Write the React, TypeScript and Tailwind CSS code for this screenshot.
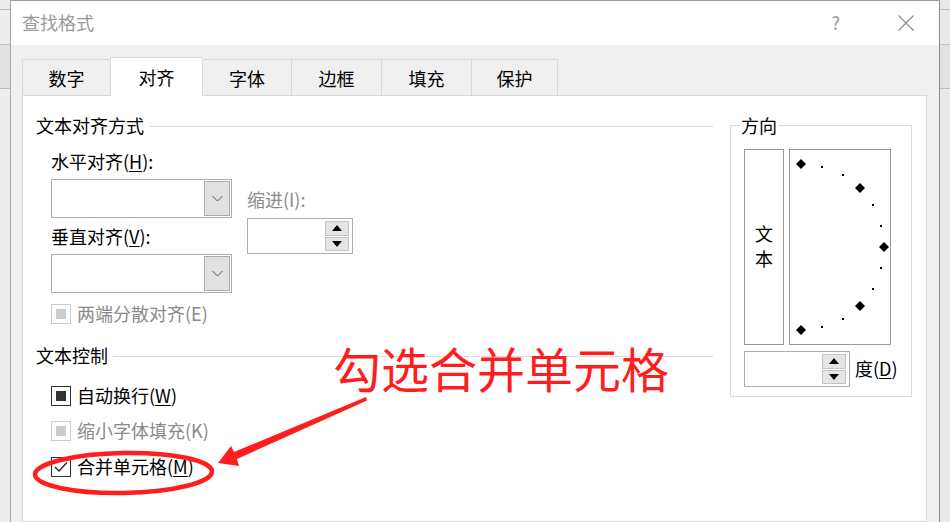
import React from 'react';

const tabs = [
  { label: '数字', w: 'w-[88px]' },
  { label: '对齐', w: 'w-[92px]', active: true },
  { label: '字体', w: 'w-[89px]' },
  { label: '边框', w: 'w-[90px]' },
  { label: '填充', w: 'w-[90px]' },
  { label: '保护', w: 'w-[87px]', last: true },
];

const Chevron = () => (
  <svg width="11" height="7" viewBox="0 0 11 7">
    <path d="M0.5 1 L5.5 6 L10.5 1" fill="none" stroke="#5a5a5a" strokeWidth="1" />
  </svg>
);

const Tri: React.FC<{ down?: boolean }> = ({ down }) => (
  <svg width="10" height="6" viewBox="0 0 10 6">
    <polygon points={down ? '0,0 10,0 5,6' : '0,6 10,6 5,0'} fill="#000" />
  </svg>
);

const Combo = () => (
  <div className="flex h-[39px] w-[181px] justify-end border border-[#adadad] bg-white p-[1px]">
    <div className="flex w-[26px] items-center justify-center border border-[#adadad] bg-[#e1e1e1]">
      <Chevron />
    </div>
  </div>
);

const Spinner = () => (
  <div className="flex h-[36px] w-[106px] justify-end border border-[#adadad] bg-white py-[2px] pr-[3px]">
    <div className="flex w-[24px] flex-col gap-px">
      <div className="flex flex-1 items-center justify-center border border-[#c4c4c4] bg-[#e5e5e5]">
        <Tri />
      </div>
      <div className="flex flex-1 items-center justify-center border border-[#c4c4c4] bg-[#e5e5e5]">
        <Tri down />
      </div>
    </div>
  </div>
);

type BoxKind = 'mixed' | 'checked' | 'disabled';

const CheckRow: React.FC<{ kind: BoxKind; children: React.ReactNode; className?: string }> = ({ kind, children, className }) => (
  <div className={`flex h-[20px] items-center ${className ?? ''}`}>
    <div
      className={`flex h-[20px] w-[20px] items-center justify-center border bg-white ${
        kind === 'disabled' ? 'border-[#cccccc]' : 'border-[#333333]'
      }`}
    >
      {kind === 'mixed' && <div className="h-[10px] w-[10px] bg-[#333333]" />}
      {kind === 'disabled' && <div className="h-[10px] w-[10px] bg-[#cccccc]" />}
      {kind === 'checked' && (
        <svg width="14" height="12" viewBox="0 0 14 12">
          <path d="M1 6 L5 10 L13 1.5" fill="none" stroke="#222" strokeWidth="1.3" />
        </svg>
      )}
    </div>
    <span className={`ml-[6px] pb-[2px] leading-[22px] ${kind === 'disabled' ? 'text-[#8a8a8a]' : 'text-black'}`}>{children}</span>
  </div>
);

const GroupHeader: React.FC<{ label: string; className?: string }> = ({ label, className }) => (
  <div className={`flex h-[24px] items-center ${className ?? ''}`}>
    <span className="pb-[2px] leading-[22px]">{label}</span>
    <div className="ml-[5px] h-px flex-1 bg-[#dcdcdc]" />
  </div>
);

const Side: React.FC<{ right?: boolean }> = ({ right }) => (
  <div className={`flex w-[10px] flex-col ${right ? 'bg-[#e9e9e9]' : 'bg-[#ededed]'}`}>
    <div className="h-[10px] border-b border-[#bdbdbd]" />
    <div className="h-[35px] border-b border-[#c4c4c4]" />
    <div className="h-[44px] border-b border-[#bdbdbd] bg-[#e2e2e2]" />
    <div className="flex-1" />
  </div>
);

const bigDots: [number, number][] = [
  [12, 15],
  [71, 39],
  [95, 98],
  [71, 157],
  [12, 181],
];
const smallDots: [number, number][] = [
  [33, 18],
  [54, 26],
  [84, 56],
  [92, 77],
  [92, 119],
  [84, 140],
  [54, 170],
  [33, 178],
];

const Dial = () => (
  <svg width="100" height="194" viewBox="1 1 100 194">
    {bigDots.map(([x, y]) => (
      <polygon key={`${x}-${y}`} points={`${x},${y - 5} ${x + 5},${y} ${x},${y + 5} ${x - 5},${y}`} fill="#000" />
    ))}
    {smallDots.map(([x, y]) => (
      <rect key={`${x}-${y}`} x={x - 1} y={y - 1} width="2" height="2" fill="#000" />
    ))}
  </svg>
);

export default function App() {
  return (
    <div className="relative flex h-[522px] w-[950px] overflow-hidden bg-[#ededed] font-['Noto_Sans_CJK_SC',sans-serif] text-[18px] text-black">
      <Side />
      <div className="flex w-[930px] flex-col border-x border-t border-l-[#a6a6a6] border-r-[#8e8e8e] border-t-[#9a9a9a]">
        {/* title bar */}
        <div className="flex h-[44px] items-center bg-white pb-[3px] pl-[11px] pr-[25px]">
          <span className="leading-[24px] text-[#9b9b9b]">查找格式</span>
          <span className="ml-auto leading-[24px] text-[#9b9b9b]">?</span>
          <svg className="ml-[58px] mt-[2px]" width="16" height="16" viewBox="0 0 16 16">
            <path d="M0.5 0.5 L15.5 15.5 M15.5 0.5 L0.5 15.5" stroke="#8a8a8a" strokeWidth="1.1" />
          </svg>
        </div>

        {/* body */}
        <div className="flex flex-1 flex-col bg-[#f0f0f0] pl-[11px] pr-[12px] pt-[12px]">
          <div className="relative z-10 flex items-end">
            {tabs.map((t) => (
              <div
                key={t.label}
                className={`flex items-center justify-center border-l border-t border-[#d9d9d9] leading-[24px] ${t.w} ${
                  t.active ? '-mb-px h-[39px] bg-white' : 'h-[36px] bg-[#f0f0f0]'
                } ${t.last ? 'border-r' : ''}`}
              >
                {t.label}
              </div>
            ))}
          </div>

          <div className="flex flex-1 border border-[#d9d9d9] bg-white pl-[13px] pr-[14px]">
            {/* left section */}
            <div className="flex w-[677px] flex-col pt-[18px]">
              <GroupHeader label="文本对齐方式" />
              <div className="ml-[15px] flex">
                <div className="flex w-[181px] flex-col">
                  <span className="mt-[12px] pb-[2px] leading-[22px]">
                    水平对齐(<span className="underline underline-offset-2">H</span>):
                  </span>
                  <div className="mt-[5px]">
                    <Combo />
                  </div>
                  <span className="mt-[7px] pb-[2px] leading-[22px]">
                    垂直对齐(<span className="underline underline-offset-2">V</span>):
                  </span>
                  <div className="mt-[5px]">
                    <Combo />
                  </div>
                </div>
                <div className="ml-[15px] flex flex-col pt-[50px]">
                  <span className="pb-[2px] leading-[22px] text-[#8a8a8a]">缩进(I):</span>
                  <div className="mt-[6px]">
                    <Spinner />
                  </div>
                </div>
              </div>
              <CheckRow kind="disabled" className="ml-[15px] mt-[11px]">
                两端分散对齐(E)
              </CheckRow>

              <GroupHeader label="文本控制" className="mt-[20px]" />
              <CheckRow kind="mixed" className="ml-[15px] mt-[18px]">
                自动换行(<span className="underline underline-offset-2">W</span>)
              </CheckRow>
              <CheckRow kind="disabled" className="ml-[15px] mt-[15px]">
                缩小字体填充(K)
              </CheckRow>
              <CheckRow kind="checked" className="ml-[15px] mt-[16px]">
                合并单元格(<span className="underline underline-offset-2">M</span>)
              </CheckRow>
            </div>

            {/* orientation group */}
            <div className="relative ml-[17px] mt-[29px] h-[272px] w-[182px] border border-[#dcdcdc] pl-[13px] pt-[23px]">
              <span className="absolute left-[9px] top-[-12px] bg-white px-px pb-[2px] leading-[22px]">方向</span>
              <div className="flex">
                <div className="flex h-[196px] w-[40px] flex-col items-center justify-center border border-[#999999] pb-[2px] leading-[25px]">
                  <span>文</span>
                  <span>本</span>
                </div>
                <div className="ml-[5px] h-[196px] w-[102px] border border-[#999999]">
                  <Dial />
                </div>
              </div>
              <div className="mt-[6px] flex items-center">
                <Spinner />
                <span className="ml-[5px] pb-[2px] leading-[22px]">
                  度(<span className="underline underline-offset-2">D</span>)
                </span>
              </div>
            </div>
          </div>
        </div>
      </div>
      <Side right />

      {/* annotation */}
      <div className="absolute left-[333px] top-[341px] text-[48px] leading-[52px] text-[#ff1d1d]">勾选合并单元格</div>
      <svg className="pointer-events-none absolute left-0 top-0" width="950" height="522" viewBox="0 0 950 522">
        <ellipse cx="123.5" cy="473" rx="88.5" ry="20" fill="none" stroke="#ff1d1d" strokeWidth="4.5" transform="rotate(-1 123.5 473)" />
        <polygon points="218,463 231,446 234,452 366,397 367,400.5 237,459 239,466" fill="#ff1d1d" />
      </svg>
    </div>
  );
}
